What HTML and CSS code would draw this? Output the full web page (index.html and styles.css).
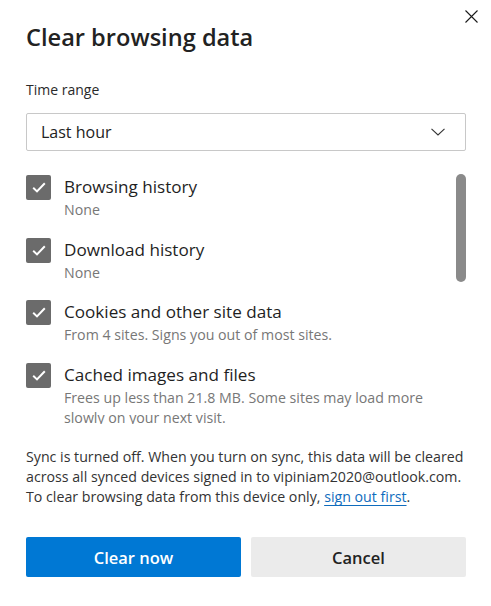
FILE: index.html
```html
<!DOCTYPE html>
<html lang="en">
<head>
<meta charset="utf-8">
<title>Clear browsing data</title>
<link rel="stylesheet" href="styles.css">
</head>
<body>
<div class="dialog">
  <button class="close" aria-label="Close">
    <svg width="13" height="13" viewBox="0 0 13 13"><path d="M0.5 0.5 L12.5 12.5 M12.5 0.5 L0.5 12.5" stroke="#1a1a1a" stroke-width="1.1" fill="none"/></svg>
  </button>
  <h1 class="title">Clear browsing data</h1>
  <div class="field-label">Time range</div>
  <div class="select">
    <span>Last hour</span>
    <svg class="chev" width="14" height="8" viewBox="0 0 14 8"><path d="M0.5 0.8 L7 7 L13.5 0.8" stroke="#333" stroke-width="1.1" fill="none"/></svg>
  </div>
  <div class="list-wrap">
    <div class="list">
      <div class="item">
        <span class="check"><svg width="14" height="11" viewBox="0 0 14 11"><path d="M1.2 5.8 L5 9.4 L12.8 1.2" stroke="#fff" stroke-width="2" fill="none"/></svg></span>
        <div class="item-text"><div class="item-title">Browsing history</div><div class="item-sub">None</div></div>
      </div>
      <div class="item">
        <span class="check"><svg width="14" height="11" viewBox="0 0 14 11"><path d="M1.2 5.8 L5 9.4 L12.8 1.2" stroke="#fff" stroke-width="2" fill="none"/></svg></span>
        <div class="item-text"><div class="item-title">Download history</div><div class="item-sub">None</div></div>
      </div>
      <div class="item">
        <span class="check"><svg width="14" height="11" viewBox="0 0 14 11"><path d="M1.2 5.8 L5 9.4 L12.8 1.2" stroke="#fff" stroke-width="2" fill="none"/></svg></span>
        <div class="item-text"><div class="item-title">Cookies and other site data</div><div class="item-sub">From 4 sites. Signs you out of most sites.</div></div>
      </div>
      <div class="item">
        <span class="check"><svg width="14" height="11" viewBox="0 0 14 11"><path d="M1.2 5.8 L5 9.4 L12.8 1.2" stroke="#fff" stroke-width="2" fill="none"/></svg></span>
        <div class="item-text"><div class="item-title">Cached images and files</div><div class="item-sub">Frees up less than 21.8 MB. Some sites may load more<br>slowly on your next visit.</div></div>
      </div>
    </div>
    <div class="thumb"></div>
  </div>
  <p class="sync">Sync is turned off. When you turn on sync, this data will be cleared<br>across all synced devices signed in to vipiniam2020@outlook.com.<br>To clear browsing data from this device only, <a href="#">sign out first</a>.</p>
  <div class="buttons">
    <button class="btn primary">Clear now</button>
    <button class="btn secondary">Cancel</button>
  </div>
</div>
</body>
</html>
```
FILE: styles.css
```css
html, body {
  margin: 0;
  padding: 0;
  background: #fff;
}
body {
  font-family: "Open Sans", "Noto Sans", sans-serif;
  color: #1f1f1f;
}
.dialog {
  position: relative;
  width: 491px;
  height: 606px;
  box-sizing: border-box;
  padding: 0 25px 0 26px;
}
.close {
  position: absolute;
  top: 10px;
  left: 465px;
  padding: 0;
  border: 0;
  background: none;
  width: 13px;
  height: 13px;
  display: block;
}
.close svg { display: block; }
.title {
  margin: 0;
  padding-top: 21px;
  font-size: 23.6px;
  line-height: 32px;
  font-weight: 600;
  color: #222;
}
.field-label {
  margin-top: 27px;
  font-size: 14px;
  line-height: 20px;
  color: #2a2a2a;
}
.select {
  margin-top: 13px;
  height: 38px;
  box-sizing: border-box;
  border: 1px solid #c8c8c8;
  border-radius: 2px;
  display: flex;
  align-items: center;
  justify-content: space-between;
  padding: 0 20px 0 14px;
  font-size: 16px;
  color: #222;
}
.chev { display: block; }
.list-wrap {
  position: relative;
  margin-top: 23px;
  height: 250px;
  overflow: hidden;
}
.list {
  display: flex;
  flex-direction: column;
  gap: 16.5px;
}
.item {
  display: flex;
  align-items: flex-start;
  gap: 13px;
}
.check {
  flex: none;
  width: 25px;
  height: 25px;
  border-radius: 2px;
  background: #6b6b6b;
  display: flex;
  align-items: center;
  justify-content: center;
  margin-top: 1px;
}
.check svg { display: block; }
.item-title {
  font-size: 17.1px;
  line-height: 26px;
  font-weight: 500;
  color: #1f1f1f;
}
.item-sub {
  font-size: 14.2px;
  line-height: 20px;
  color: #777;
}
.thumb {
  position: absolute;
  top: 0;
  left: 430px;
  width: 10px;
  height: 108px;
  border-radius: 5px;
  background: #8a8a8a;
}
.sync {
  margin: 23px 0 0;
  font-size: 14.2px;
  line-height: 20px;
  color: #333;
  white-space: nowrap;
}
.sync a {
  color: #0f6cbd;
  text-decoration: underline;
  text-underline-offset: 3px;
}
.buttons {
  margin-top: 30px;
  display: flex;
  gap: 10px;
}
.btn {
  flex: 1;
  height: 40px;
  border: 0;
  border-radius: 2px;
  font-family: inherit;
  font-size: 16.5px;
  font-weight: 600;
  padding: 0;
}
.primary {
  background: #0078d4;
  color: #fff;
}
.secondary {
  background: #ebebeb;
  color: #222;
}
```
